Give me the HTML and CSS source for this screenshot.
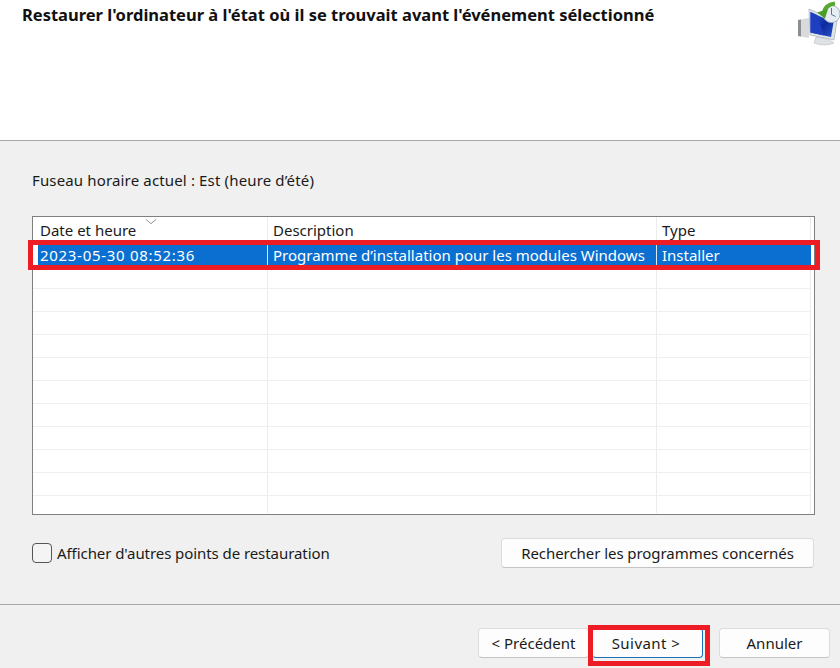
FILE: index.html
```html
<!DOCTYPE html>
<html lang="fr">
<head>
<meta charset="utf-8">
<title>Restauration du système</title>
<link rel="stylesheet" href="styles.css">
</head>
<body>
<div class="dialog">
  <header class="head">
    <h1 class="title">Restaurer l'ordinateur à l'état où il se trouvait avant l'événement sélectionné</h1>
    <svg class="logo" viewBox="0 0 44 46" width="44" height="46" aria-hidden="true">
      <defs>
        <linearGradient id="scr" x1="0" y1="0" x2="1" y2="1">
          <stop offset="0" stop-color="#2f5fe0"/>
          <stop offset="0.55" stop-color="#0d2a9e"/>
          <stop offset="1" stop-color="#2a55c8"/>
        </linearGradient>
      </defs>
      <path d="M2 20 L13 18 L13 38 L2 36 Z" fill="#d8dadb"/>
      <path d="M2 20 L5 19.5 L5 36.5 L2 36 Z" fill="#8a8f91"/>
      <path d="M13 9 L41 21 L38 40 L14 35 Z" fill="#dfe4e7" stroke="#9aa4aa" stroke-width="0.6"/>
      <path d="M14.5 12 L37.5 22.5 L35 37 L14.5 32.5 Z" fill="url(#scr)"/>
      <path d="M14.5 12 L21 15 L28 35.5 L14.5 32.5 Z" fill="#1d3fc0"/>
      <path d="M20 37 L32 39 L38 43 Q28 47 18 43 Z" fill="#dfe2e4" stroke="#aeb4b8" stroke-width="0.5"/>
      <circle cx="35.5" cy="14" r="8.6" fill="#e6edf3" stroke="#a3b1bc" stroke-width="1"/>
      <path d="M35.5 8 L35.5 14.5 L39.5 16.5" fill="none" stroke="#5f7688" stroke-width="1"/>
      <path d="M28 12 Q30 4.5 39 3.5" fill="none" stroke="#58a832" stroke-width="4.2"/>
      <path d="M21 12.5 L32 9 L29 18.5 Z" fill="#4a9e28"/>
    </svg>
  </header>
  <main class="body">
    <p class="tz">Fuseau horaire actuel : Est (heure d’été)</p>
    <div class="list">
      <div class="row head-row">
        <div class="cell c1">Date et heure<svg class="sort" viewBox="0 0 14 7" width="14" height="7" aria-hidden="true"><path d="M1 1 L7 6 L13 1" fill="none" stroke="#8a8a8a" stroke-width="1.1"/></svg></div>
        <div class="cell c2">Description</div>
        <div class="cell c3">Type</div>
      </div>
      <div class="row selected">
        <div class="cell c1 stamp">2023-05-30 08:52:36</div>
        <div class="cell c2">Programme d’installation pour les modules Windows</div>
        <div class="cell c3">Installer</div>
      </div>
      <div class="row"><div class="cell c1"></div><div class="cell c2"></div><div class="cell c3"></div></div>
      <div class="row"><div class="cell c1"></div><div class="cell c2"></div><div class="cell c3"></div></div>
      <div class="row"><div class="cell c1"></div><div class="cell c2"></div><div class="cell c3"></div></div>
      <div class="row"><div class="cell c1"></div><div class="cell c2"></div><div class="cell c3"></div></div>
      <div class="row"><div class="cell c1"></div><div class="cell c2"></div><div class="cell c3"></div></div>
      <div class="row"><div class="cell c1"></div><div class="cell c2"></div><div class="cell c3"></div></div>
      <div class="row"><div class="cell c1"></div><div class="cell c2"></div><div class="cell c3"></div></div>
      <div class="row"><div class="cell c1"></div><div class="cell c2"></div><div class="cell c3"></div></div>
      <div class="row"><div class="cell c1"></div><div class="cell c2"></div><div class="cell c3"></div></div>
      <div class="row"><div class="cell c1"></div><div class="cell c2"></div><div class="cell c3"></div></div>
      <div class="row last"><div class="cell c1"></div><div class="cell c2"></div><div class="cell c3"></div></div>
      <div class="mark-row"></div>
    </div>
    <div class="options">
      <label class="check"><span class="box"></span>Afficher d'autres points de restauration</label>
      <button class="btn scan" type="button">Rechercher les programmes concernés</button>
    </div>
  </main>
  <footer class="foot">
    <button class="btn prev" type="button">&lt; Précédent</button>
    <button class="btn next" type="button">Suivant &gt;<span class="mark-btn"></span></button>
    <button class="btn cancel" type="button">Annuler</button>
  </footer>
</div>
</body>
</html>
```
FILE: styles.css
```css
* { box-sizing: border-box; }
html, body { margin: 0; padding: 0; }
body {
  width: 840px;
  height: 668px;
  overflow: hidden;
  background: #f0f0f0;
  color: #1a1a1a;
  font-family: "Noto Sans", "Open Sans", sans-serif;
  font-size: 15px;
}
.dialog { display: flex; flex-direction: column; height: 668px; }
.head {
  height: 141px;
  flex: none;
  background: #fff;
  border-bottom: 1px solid #a8a8a8;
  display: flex;
  justify-content: space-between;
  align-items: flex-start;
  padding: 5px 0 0 22px;
}
.title {
  margin: 0;
  font-family: "Noto Sans", sans-serif;
  font-size: 16.5px;
  line-height: 20px;
  font-weight: 700;
  color: #111;
  white-space: nowrap;
}
.logo { flex: none; margin-top: -5px; filter: blur(0.35px); }
.body { height: 464px; flex: none; padding: 29px 26px 0 32px; border-bottom: 1px solid #a8a8a8; }
.tz { margin: 0 0 26px; line-height: 20px; letter-spacing: 0.15px; }
.list {
  position: relative;
  height: 299px;
  width: 783px;
  background: #fff;
  border: 1px solid #808080;
}
.row { display: flex; height: 23px; width: 778px; border-bottom: 1px solid #efefef; }
.row.head-row { height: 28px; border-bottom: 0; }
.row.selected { height: 21px; margin-left: 5px; width: 773px; background: #0a6fd0; color: #fff; border-bottom: 0; }
.row.last { height: 17px; border-bottom: 0; }
.cell { border-right: 1px solid #ececec; line-height: 27px; position: relative; white-space: nowrap; }
.c1 { width: 235px; padding-left: 7px; }
.c2 { width: 389px; padding-left: 5px; }
.c3 { width: 154px; padding-left: 5px; }
.selected .cell { border-right-color: #d7e7f6; line-height: 21px; }
.selected .c1 { width: 230px; padding-left: 2px; }
.selected .c3 { border-right: 0; }
.stamp { letter-spacing: 0.7px; }
.sort { position: absolute; left: 112px; top: 1px; width: 12px; }
.mark-row {
  position: absolute;
  left: -5px;
  top: 23px;
  width: 792px;
  height: 30px;
  border: 5px solid #ee1c25;
}
.options { display: flex; justify-content: space-between; align-items: center; margin-top: 23px; height: 30px; }
.check { display: flex; align-items: center; gap: 5px; letter-spacing: -0.07px; }
.box {
  width: 20px;
  height: 20px;
  background: #f4f4f4;
  border: 1px solid #555;
  border-radius: 4px;
}
.btn {
  font: inherit;
  color: #1a1a1a;
  height: 30px;
  background: #fdfdfd;
  border: 1px solid #dcdcdc;
  border-bottom-color: #c4c4c4;
  border-radius: 4px;
  padding: 0;
  position: relative;
}
.scan { width: 313px; letter-spacing: -0.06px; }
.foot { flex: 1; display: flex; align-items: flex-start; padding: 23px 0 0 478px; }
.prev { width: 111px; }
.next { width: 111px; margin-left: 3px; padding-right: 3px; letter-spacing: 0.45px; border-right-color: #1a6fb8; border-bottom-color: #1a6fb8; }
.cancel { width: 111px; margin-left: 16px; }
.mark-btn {
  position: absolute;
  left: -5px;
  top: -4px;
  width: 122px;
  height: 41px;
  border: 5px solid #ee1c25;
}
```
